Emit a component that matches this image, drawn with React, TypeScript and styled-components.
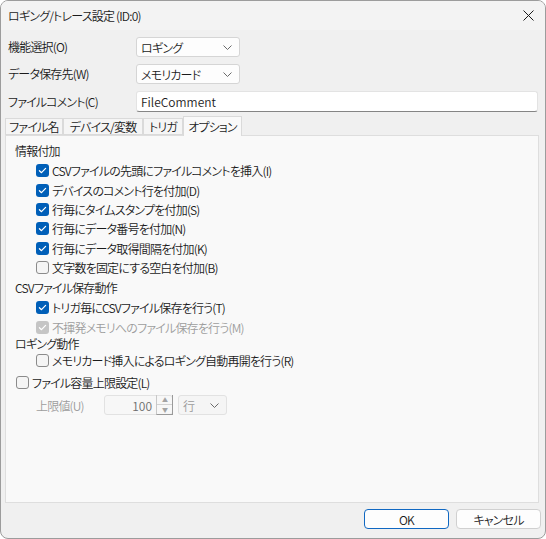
import React from 'react';
import styled, { createGlobalStyle } from 'styled-components';

const GlobalStyle = createGlobalStyle`
    html, body {
        margin: 0;
        padding: 0;
        background: #ffffff;
    }
    body {
        font-family: "Noto Sans CJK JP", "Noto Sans", sans-serif;
        font-size: 12px;
        font-weight: 350;
        font-feature-settings: "palt";
        letter-spacing: -0.8px;
        color: #1b1b1b;
    }
`;

type CheckState = 'on' | 'off' | 'locked';

const CheckMark = () => (
    <svg width="13" height="13" viewBox="0 0 13 13">
        <polyline
            points="3.4,6.7 5.5,8.7 9.6,4.4"
            fill="none"
            stroke="#ffffff"
            strokeWidth="1.2"
            strokeLinecap="round"
            strokeLinejoin="round"
        />
    </svg>
);

const Chevron = () => (
    <svg width="9" height="5" viewBox="0 0 9 5">
        <polyline points="0.5,0.5 4.5,4.5 8.5,0.5" fill="none" stroke="#6a6a6a" strokeWidth="1" />
    </svg>
);

const CloseIcon = () => (
    <svg width="11" height="11" viewBox="0 0 11 11">
        <path d="M0.5 0.5 L10.5 10.5 M10.5 0.5 L0.5 10.5" stroke="#1a1a1a" strokeWidth="1" />
    </svg>
);

const Check = ({ state }: { state: CheckState }) => (
    <Box $state={state}>{state !== 'off' && <CheckMark />}</Box>
);

const CheckRow = ({
    state,
    label,
    indent = 21,
    h = 20,
}: {
    state: CheckState;
    label: string;
    indent?: number;
    h?: number;
}) => (
    <Row $h={h} $indent={indent}>
        <Check state={state} />
        <ItemText $muted={state === 'locked'}>{label}</ItemText>
    </Row>
);

export default function App() {
    return (
        <>
            <GlobalStyle />
            <Window>
                <TitleBar>
                    <span>ロギング/トレース設定 (ID:0)</span>
                    <CloseButton>
                        <CloseIcon />
                    </CloseButton>
                </TitleBar>

                <Form>
                    <Label>機能選択(O)</Label>
                    <Combo $w={104}>
                        <span>ロギング</span>
                        <Chevron />
                    </Combo>
                    <Label>データ保存先(W)</Label>
                    <Combo $w={104}>
                        <span>メモリカード</span>
                        <Chevron />
                    </Combo>
                    <Label>ファイルコメント(C)</Label>
                    <TextBox>FileComment</TextBox>
                </Form>

                <TabStrip>
                    <Tab $w={58}>ファイル名</Tab>
                    <Tab $w={80}>デバイス/変数</Tab>
                    <Tab $w={40}>トリガ</Tab>
                    <Tab $w={59} $active>オプション</Tab>
                </TabStrip>

                <Panel>
                    <Heading $h={20}>情報付加</Heading>
                    <CheckRow state="on" label="CSVファイルの先頭にファイルコメントを挿入(I)" />
                    <CheckRow state="on" label="デバイスのコメント行を付加(D)" />
                    <CheckRow state="on" label="行毎にタイムスタンプを付加(S)" h={19} />
                    <CheckRow state="on" label="行毎にデータ番号を付加(N)" h={19} />
                    <CheckRow state="on" label="行毎にデータ取得間隔を付加(K)" />
                    <CheckRow state="off" label="文字数を固定にする空白を付加(B)" h={19} />

                    <Heading $h={20}>CSVファイル保存動作</Heading>
                    <CheckRow state="on" label="トリガ毎にCSVファイル保存を行う(T)" />
                    <CheckRow state="locked" label="不揮発メモリへのファイル保存を行う(M)" />

                    <Heading $h={12}>ロギング動作</Heading>
                    <CheckRow state="off" label="メモリカード挿入によるロギング自動再開を行う(R)" h={22} />
                    <CheckRow state="off" label="ファイル容量上限設定(L)" indent={1} h={22} />

                    <Row $h={24} $indent={21}>
                        <DimLabel>上限値(U)</DimLabel>
                        <Spin>
                            <SpinValue>100</SpinValue>
                            <SpinArrows>
                                <span>▲</span>
                                <span>▼</span>
                            </SpinArrows>
                        </Spin>
                        <Combo $w={49} $disabled>
                            <span>行</span>
                            <Chevron />
                        </Combo>
                    </Row>
                </Panel>

                <Footer>
                    <Button $primary>OK</Button>
                    <Button>キャンセル</Button>
                </Footer>
            </Window>
        </>
    );
}

const Window = styled.div`
    box-sizing: border-box;
    width: 546px;
    height: 539px;
    display: flex;
    flex-direction: column;
    background: #f0f0f0;
    border: 1px solid #9c9c9c;
    border-radius: 8px;
    overflow: hidden;
`;

const TitleBar = styled.div`
    height: 29px;
    flex: none;
    display: flex;
    align-items: center;
    justify-content: space-between;
    padding-left: 7px;
    background: #f3f3f3;
`;

const CloseButton = styled.div`
    width: 46px;
    height: 29px;
    display: flex;
    align-items: center;
    justify-content: center;
    margin-right: -6px;
`;

const Form = styled.div`
    display: grid;
    grid-template-columns: 128px 1fr;
    row-gap: 7px;
    align-items: center;
    padding: 7px 7px 0 7px;
`;

const Label = styled.div`
    line-height: 20px;
`;

const Combo = styled.div<{ $w: number; $disabled?: boolean }>`
    box-sizing: border-box;
    width: ${p => p.$w}px;
    height: 20px;
    display: flex;
    align-items: center;
    justify-content: space-between;
    padding: 0 7px 0 4px;
    background: ${p => (p.$disabled ? '#f5f5f5' : '#fdfdfd')};
    border: 1px solid ${p => (p.$disabled ? '#e2e2e2' : '#d5d5d5')};
    border-radius: 3px;
    color: ${p => (p.$disabled ? '#9a9a9a' : '#1b1b1b')};
`;

const TextBox = styled.div`
    box-sizing: border-box;
    height: 21px;
    display: flex;
    align-items: center;
    padding: 0 4px;
    background: #ffffff;
    border: 1px solid #e3e3e3;
    border-bottom-color: #858585;
    border-radius: 3px;
    letter-spacing: 0;
`;

const TabStrip = styled.div`
    display: flex;
    align-items: flex-end;
    height: 20px;
    margin-top: 4px;
    padding-left: 4px;
    position: relative;
    z-index: 1;
    margin-bottom: -1px;
`;

const Tab = styled.div<{ $w: number; $active?: boolean }>`
    box-sizing: border-box;
    width: ${p => p.$w}px;
    height: ${p => (p.$active ? '20px' : '17px')};
    margin-bottom: ${p => (p.$active ? '0' : '1px')};
    display: flex;
    align-items: center;
    justify-content: center;
    padding-bottom: ${p => (p.$active ? '1px' : '0')};
    background: ${p => (p.$active ? '#f9f9f9' : '#f5f5f5')};
    border: 1px solid #dadada;
    border-bottom: ${p => (p.$active ? 'none' : '1px solid #dadada')};
    & + & {
        border-left: ${p => (p.$active ? '1px solid #dadada' : 'none')};
    }
`;

const Panel = styled.div`
    flex: 1;
    display: flex;
    flex-direction: column;
    margin: 0 6px 0 4px;
    padding: 4px 8px 0 9px;
    background: #f9f9f9;
    border: 1px solid #dedede;
`;

const Heading = styled.div<{ $h: number }>`
    height: ${p => p.$h}px;
    display: flex;
    align-items: center;
    white-space: nowrap;
`;

const Row = styled.div<{ $h: number; $indent: number }>`
    height: ${p => p.$h}px;
    display: flex;
    align-items: center;
    padding-left: ${p => p.$indent}px;
    white-space: nowrap;
`;

const Box = styled.div<{ $state: CheckState }>`
    box-sizing: border-box;
    width: 13px;
    height: 13px;
    flex: none;
    display: flex;
    border-radius: 3px;
    margin-right: 3px;
    background: ${p =>
        p.$state === 'on' ? '#005fb8' : p.$state === 'locked' ? '#c5c5c5' : '#f5f5f5'};
    border: ${p => (p.$state === 'off' ? '1px solid #8b8b8b' : 'none')};
`;

const ItemText = styled.span<{ $muted?: boolean }>`
    color: ${p => (p.$muted ? '#9d9d9d' : '#1b1b1b')};
`;

const DimLabel = styled.span`
    width: 68px;
    color: #9d9d9d;
`;

const Spin = styled.div`
    box-sizing: border-box;
    width: 69px;
    height: 20px;
    display: flex;
    margin-right: 5px;
    background: #f7f7f7;
    border: 1px solid #e2e2e2;
    border-radius: 3px;
`;

const SpinValue = styled.div`
    flex: 1;
    display: flex;
    align-items: center;
    justify-content: flex-end;
    padding-right: 4px;
    color: #6d6d6d;
    letter-spacing: 0;
`;

const SpinArrows = styled.div`
    width: 15px;
    display: flex;
    flex-direction: column;
    border-left: 1px solid #c8c8c8;
    border-right: 1px solid #9a9a9a;
    border-bottom: 1px solid #9a9a9a;
    margin: -1px -1px -1px 0;
    span {
        flex: 1;
        display: flex;
        align-items: center;
        justify-content: center;
        font-size: 6px;
        color: #a3a3a3;
        line-height: 1;
    }
    span + span {
        border-top: 1px solid #d2d2d2;
    }
`;

const Footer = styled.div`
    height: 29px;
    flex: none;
    display: flex;
    justify-content: flex-end;
    align-items: flex-start;
    gap: 7px;
    padding: 6px 4px 0 0;
`;

const Button = styled.div<{ $primary?: boolean }>`
    box-sizing: border-box;
    width: 85px;
    height: 20px;
    display: flex;
    align-items: center;
    justify-content: center;
    background: #fdfdfd;
    border: 1px solid ${p => (p.$primary ? '#1068c2' : '#d0d0d0')};
    border-radius: 4px;
`;
